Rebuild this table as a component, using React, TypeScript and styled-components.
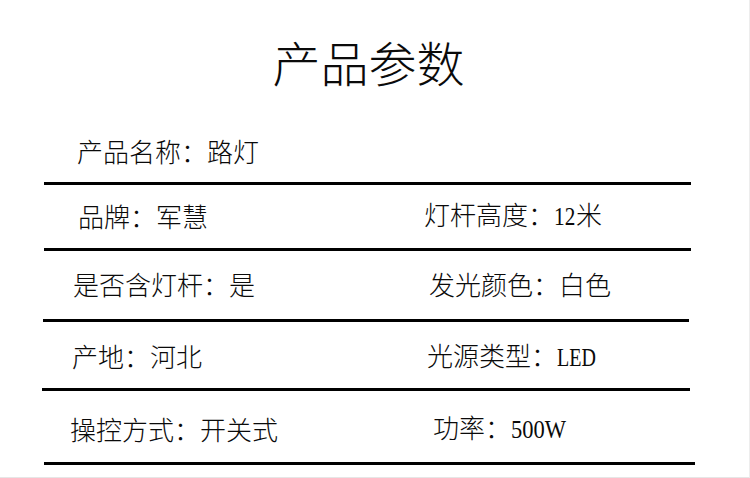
import React from "react";
import styled, { createGlobalStyle } from "styled-components";

const Global = createGlobalStyle`
  html, body { margin: 0; padding: 0; background: #ffffff; }
  * { box-sizing: border-box; }
`;

const Page = styled.div`
  width: 750px;
  height: 478px;
  background: #ffffff;
  border-right: 1px solid #ededed;
  border-bottom: 1px solid #e6e6e6;
  padding-left: 44px;
  overflow: hidden;
  font-family: "Noto Sans CJK SC", sans-serif;
  color: #0a0a0a;
`;

const Sheet = styled.div`
  width: 647px;
  display: flex;
  flex-direction: column;
`;

const Title = styled.h1`
  margin: 0;
  height: 120px;
  padding-top: 37px;
  padding-left: 2px;
  font-family: "Noto Sans CJK SC", sans-serif;
  font-weight: 300;
  font-size: 48px;
  line-height: 48px;
  text-align: center;
`;

const Row = styled.div<{ $h: number; $shift?: number; $extend?: number }>`
  height: ${(p) => p.$h}px;
  display: grid;
  grid-template-columns: 380px 1fr;
  align-items: center;
  border-bottom: 3px solid #000;
  margin-left: ${(p) => p.$shift ?? 0}px;
  margin-right: ${(p) => -(p.$extend ?? 0)}px;
`;

const Cell = styled.div<{ $indent: number; $dy?: number }>`
  padding-left: ${(p) => p.$indent}px;
  font-family: "Noto Sans CJK SC", sans-serif;
  font-weight: 300;
  font-size: 26px;
  line-height: 30px;
  white-space: nowrap;
  transform: translateY(${(p) => p.$dy ?? 0}px);
`;

const Latin = styled.span<{ $sx: number; $w: number }>`
  display: inline-block;
  width: ${(p) => p.$w}px;
  font-family: "Liberation Serif", serif;
  font-size: 25px;
  transform: scaleX(${(p) => p.$sx});
  transform-origin: left center;
`;

type Item = {
  text: string;
  latin?: string;
  sx?: number;
  w?: number;
  after?: string;
  indent: number;
};
type RowData = {
  h: number;
  shift?: number;
  extend?: number;
  dy?: number;
  left: Item;
  right?: Item;
};

const rows: RowData[] = [
  { h: 65, left: { text: "产品名称：路灯", indent: 33 } },
  {
    h: 66,
    dy: -1,
    left: { text: "品牌：军慧", indent: 34 },
    right: { text: "灯杆高度：", latin: "12", sx: 0.85, w: 22, after: "米", indent: -1 },
  },
  {
    h: 71,
    shift: -1,
    extend: -2,
    dy: -1,
    left: { text: "是否含灯杆：是", indent: 30 },
    right: { text: "发光颜色：白色", indent: 6 },
  },
  {
    h: 69,
    shift: -2,
    extend: -1,
    dy: 1,
    left: { text: "产地：河北", indent: 30 },
    right: { text: "光源类型：", latin: "LED", sx: 0.8, w: 40, indent: 5 },
  },
  {
    h: 74,
    extend: 4,
    dy: 2,
    left: { text: "操控方式：开关式", indent: 26 },
    right: { text: "功率：", latin: "500W", sx: 0.9, w: 56, indent: 9 },
  },
];

const Entry = ({ item, dy }: { item?: Item; dy?: number }) => (
  <Cell $indent={item?.indent ?? 0} $dy={dy}>
    {item?.text ?? ""}
    {item?.latin && (
      <Latin $sx={item.sx ?? 1} $w={item.w ?? 0}>
        {item.latin}
      </Latin>
    )}
    {item?.after ?? ""}
  </Cell>
);

export default function App() {
  return (
    <>
      <Global />
      <Page>
        <Sheet>
          <Title>产品参数</Title>
          {rows.map((r, i) => (
            <Row key={i} $h={r.h} $shift={r.shift} $extend={r.extend}>
              <Entry item={r.left} dy={r.dy} />
              <Entry item={r.right} dy={r.dy} />
            </Row>
          ))}
        </Sheet>
      </Page>
    </>
  );
}
